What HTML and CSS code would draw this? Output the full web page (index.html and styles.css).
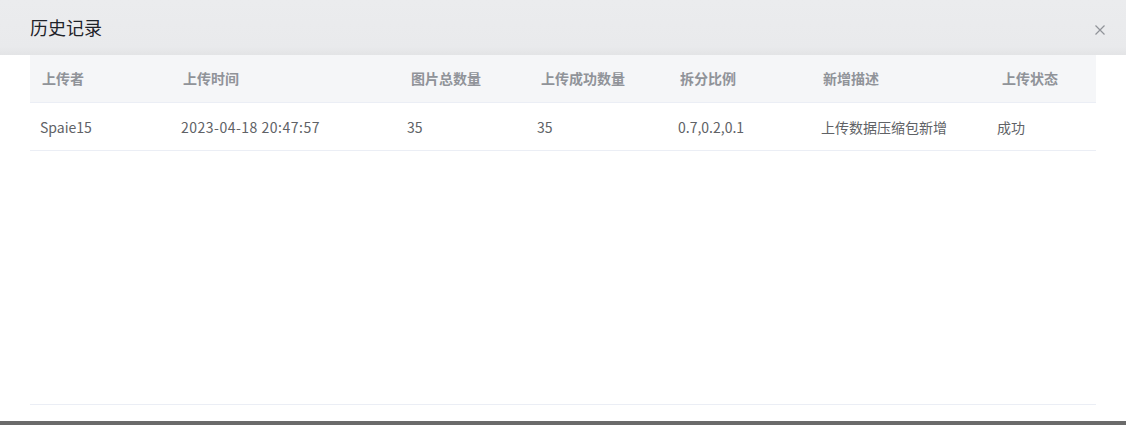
FILE: index.html
```html
<!DOCTYPE html>
<html lang="zh">
<head>
<meta charset="utf-8">
<title>历史记录</title>
<link rel="stylesheet" href="styles.css">
</head>
<body>
<div class="dialog">
  <div class="dialog-header">
    <span class="dialog-title">历史记录</span>
    <button class="close" aria-label="关闭">
      <svg width="10" height="10" viewBox="0 0 10 10"><path d="M0.5 0.5 L9.5 9.5 M9.5 0.5 L0.5 9.5" stroke="#909399" stroke-width="1.2" fill="none"/></svg>
    </button>
  </div>
  <div class="dialog-body">
    <div class="table">
      <div class="row head">
        <div class="cell c1">上传者</div>
        <div class="cell c2">上传时间</div>
        <div class="cell c3">图片总数量</div>
        <div class="cell c4">上传成功数量</div>
        <div class="cell c5">拆分比例</div>
        <div class="cell c6">新增描述</div>
        <div class="cell c7">上传状态</div>
      </div>
      <div class="row body-row">
        <div class="cell c1">Spaie15</div>
        <div class="cell c2 date">2023-04-18 20:47:57</div>
        <div class="cell c3">35</div>
        <div class="cell c4">35</div>
        <div class="cell c5">0.7,0.2,0.1</div>
        <div class="cell c6">上传数据压缩包新增</div>
        <div class="cell c7">成功</div>
      </div>
      <div class="filler"></div>
    </div>
  </div>
  <div class="bottom-bar"></div>
</div>
</body>
</html>
```

FILE: styles.css
```css
* { box-sizing: border-box; }
html, body {
  margin: 0;
  padding: 0;
  background: #ffffff;
  font-family: "Noto Sans CJK SC", "Microsoft YaHei", "Liberation Sans", sans-serif;
}
.dialog {
  width: 1126px;
  height: 425px;
  display: flex;
  flex-direction: column;
  background: #ffffff;
}
.dialog-header {
  height: 55px;
  flex: none;
  display: flex;
  align-items: center;
  justify-content: space-between;
  padding: 0 20px 0 30px;
  background: linear-gradient(#ebecee 0%, #e9eaec 85%, #e3e4e6 100%);
}
.dialog-title {
  font-size: 18px;
  color: #1f2329;
  line-height: 24px;
  margin-top: -1px;
}
.close {
  border: 0;
  background: transparent;
  padding: 0;
  width: 10px;
  height: 10px;
  display: flex;
  margin-top: 5px;
  margin-right: 1px;
}
.dialog-body {
  flex: 1;
  padding: 0 30px;
  display: flex;
  flex-direction: column;
}
.table {
  flex: 1;
  display: flex;
  flex-direction: column;
  border-bottom: 1px solid #ebeef5;
  margin-bottom: 16px;
}
.row {
  display: grid;
  grid-template-columns: 141px 226px 130px 141px 143px 176px 1fr;
  height: 48px;
  border-bottom: 1px solid #ebeef5;
  align-items: center;
}
.head {
  background: #f5f6f8;
  font-size: 14px;
  font-weight: bold;
  color: #909399;
}
.head .cell { padding-left: 12px; margin-top: -1px; }
.head .c3, .head .c4 { padding-left: 14px; }
.head .c7 { padding-left: 15px; }
.body-row {
  font-size: 14px;
  color: #606266;
}
.body-row .cell { margin-top: 1px; }
.date { letter-spacing: 0.5px; }
.cell {
  padding-left: 10px;
  white-space: nowrap;
  line-height: 20px;
}
.filler { flex: 1; }
.bottom-bar {
  height: 4px;
  flex: none;
  background: #6b6b6b;
}
```
